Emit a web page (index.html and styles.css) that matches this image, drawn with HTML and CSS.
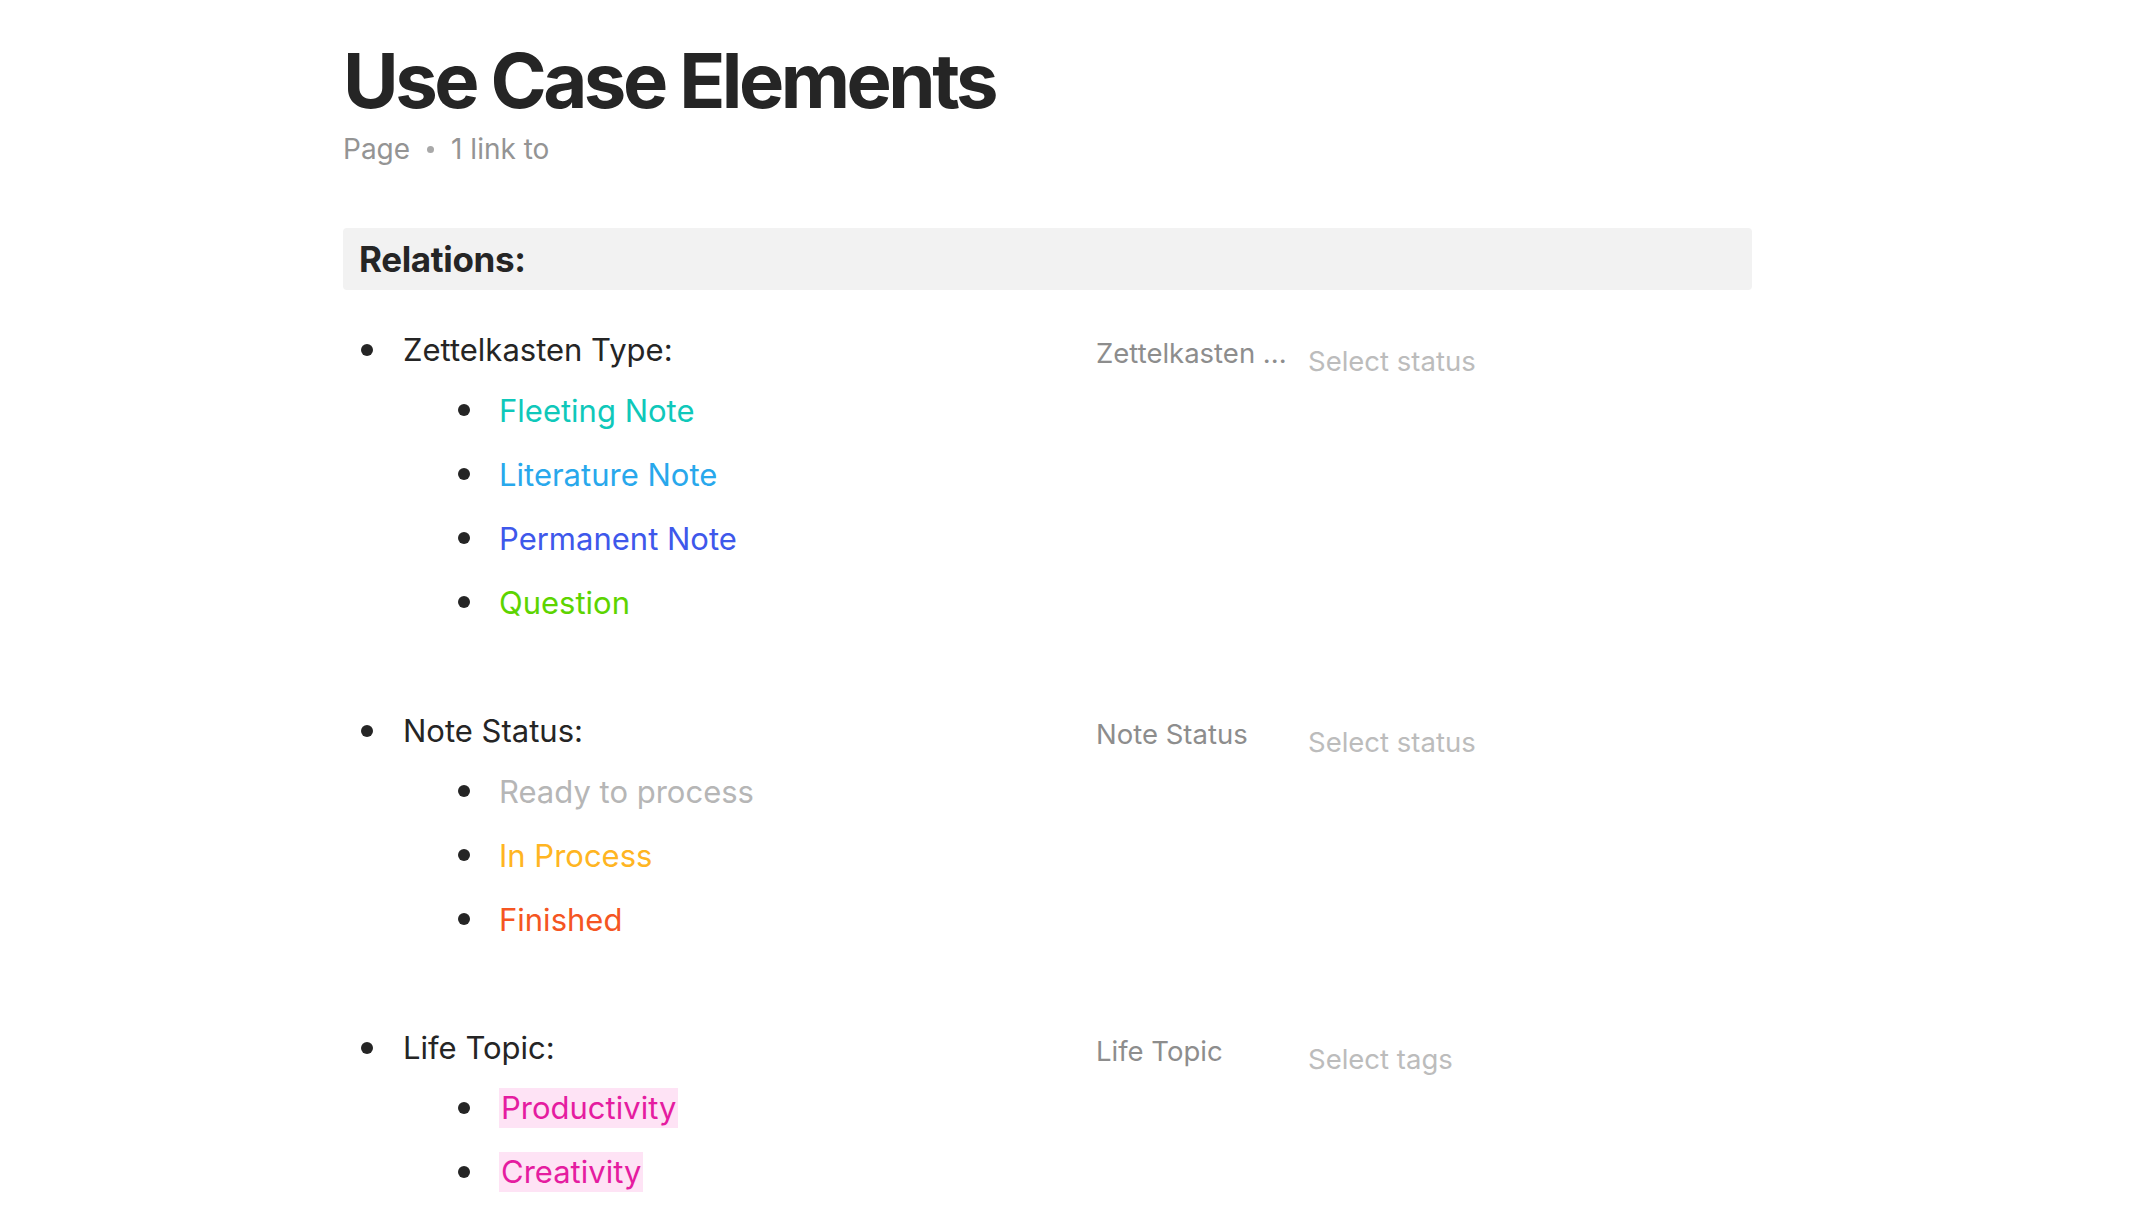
FILE: index.html
```html
<!DOCTYPE html>
<html>
<head>
<meta charset="utf-8">
<link rel="stylesheet" href="styles.css">
</head>
<body>
<main class="page">
  <h1 class="title">Use Case Elements</h1>
  <div class="meta"><span>Page</span><span class="dot"></span><span>1 link to</span></div>

  <div class="section-head">Relations:</div>

  <ul class="rel-list">
    <li class="rel">
      <div class="rel-row">
        <div class="rel-name"><span class="bullet"></span>Zettelkasten Type:</div>
        <div class="rel-cell"><span class="cell-key">Zettelkasten ...</span><span class="cell-val">Select status</span></div>
      </div>
      <ul class="opts">
        <li class="opt"><span class="bullet"></span><span class="c-teal">Fleeting Note</span></li>
        <li class="opt"><span class="bullet"></span><span class="c-sky">Literature Note</span></li>
        <li class="opt"><span class="bullet"></span><span class="c-blue">Permanent Note</span></li>
        <li class="opt"><span class="bullet"></span><span class="c-lime">Question</span></li>
      </ul>
    </li>
    <li class="rel">
      <div class="rel-row">
        <div class="rel-name"><span class="bullet"></span>Note Status:</div>
        <div class="rel-cell"><span class="cell-key">Note Status</span><span class="cell-val">Select status</span></div>
      </div>
      <ul class="opts">
        <li class="opt"><span class="bullet"></span><span class="c-grey">Ready to process</span></li>
        <li class="opt"><span class="bullet"></span><span class="c-amber">In Process</span></li>
        <li class="opt"><span class="bullet"></span><span class="c-red">Finished</span></li>
      </ul>
    </li>
    <li class="rel">
      <div class="rel-row">
        <div class="rel-name"><span class="bullet"></span>Life Topic:</div>
        <div class="rel-cell"><span class="cell-key">Life Topic</span><span class="cell-val">Select tags</span></div>
      </div>
      <ul class="opts">
        <li class="opt"><span class="bullet"></span><span class="tag">Productivity</span></li>
        <li class="opt"><span class="bullet"></span><span class="tag">Creativity</span></li>
      </ul>
    </li>
  </ul>
</main>
</body>
</html>
```
FILE: styles.css
```css
* { box-sizing: border-box; }
html, body { margin: 0; padding: 0; background: #ffffff; }
body {
  font-family: Inter, "Noto Sans", sans-serif;
  color: #252525;
  overflow: hidden;
  height: 1216px;
}
.page {
  width: 1409px;
  height: 1216px;
  overflow: hidden;
  margin-left: 343px;
  padding-top: 30px;
}
.title {
  margin: 0;
  font-size: 76px;
  font-weight: 700;
  line-height: 100px;
  letter-spacing: -0.046em;
  color: #252525;
}
.meta {
  display: flex;
  align-items: center;
  gap: 17px;
  font-size: 28px;
  line-height: 40px;
  color: #949494;
  margin-top: -1px;
}
.dot {
  width: 7px; height: 7px; border-radius: 50%;
  background: #a8a8a8;
}
.section-head {
  margin-top: 59px;
  height: 62px;
  background: #f2f2f2;
  border-radius: 4px;
  padding-left: 16px;
  display: flex;
  align-items: center;
  font-size: 35px;
  font-weight: 700;
  letter-spacing: -0.01em;
  color: #252525;
}
.rel-list { list-style: none; margin: 31px 0 0 0; padding: 0; }
.rel { margin-bottom: 68px; }
.rel-row {
  display: flex;
  align-items: center;
  height: 57px;
}
.rel-name {
  display: flex;
  align-items: center;
  width: 753px;
  font-size: 31px;
  padding-left: 18px;
}
.bullet {
  width: 12px; height: 12px; border-radius: 50%;
  background: #252525;
  margin-right: 30px;
  flex: none;
}
.rel-cell {
  display: flex;
  align-items: baseline;
  font-size: 27.5px;
  position: relative;
  top: 3px;
}
.cell-key { color: #8d8d8d; width: 212px; }
.cell-val { color: #bcbcbc; font-size: 27.5px; position: relative; top: 8px; }
.opts { list-style: none; margin: 0; padding: 0 0 0 115px; }
.opt {
  display: flex;
  align-items: center;
  height: 64px;
  font-size: 31px;
}
.opt .bullet { margin-right: 29px; }
.c-teal { color: #0fc8ba; }
.c-sky { color: #28a8ec; }
.c-blue { color: #3e58eb; }
.c-lime { color: #5dd400; }
.c-grey { color: #b6b6b6; }
.c-amber { color: #ffb522; }
.c-red { color: #f55522; }
.tag {
  color: #e51ca0;
  background: #fee3f5;
  padding: 0 2px;
  line-height: 40px;
}
```
